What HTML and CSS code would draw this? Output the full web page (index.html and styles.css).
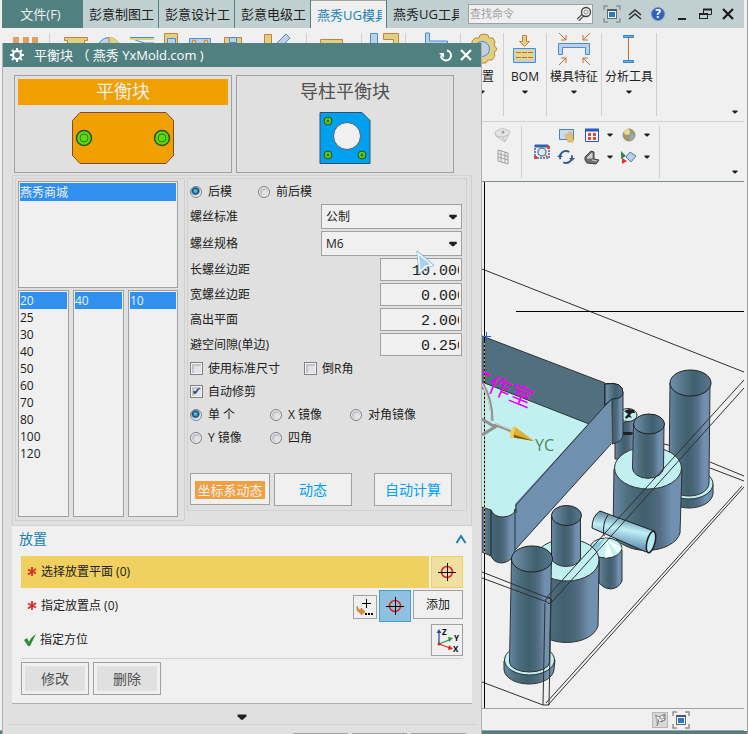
FILE: index.html
```html
<!DOCTYPE html>
<html lang="zh-CN">
<head>
<meta charset="utf-8">
<title>平衡块</title>
<link rel="stylesheet" href="styles.css">
</head>
<body>
<svg class="defs" width="0" height="0" aria-hidden="true">
  <defs>
    <symbol id="caret" viewBox="0 0 8 8"><path d="M1.500 2.500h5v1l-2 2h-1l-2-2z" fill="#202020"/></symbol>
    <symbol id="target" viewBox="0 0 20 20"><circle cx="10" cy="10" r="5.500" fill="none" stroke="#e02020" stroke-width="1.500"/><path d="M10.500 1v18M1 10.500h18" stroke="#000"/></symbol>
    <symbol id="star" viewBox="0 0 10 10"><path d="M5 0v9M1 2.500l8 4M9 2L1 7.500" stroke="#d83028" stroke-width="1.800"/></symbol>
    <symbol id="screen" viewBox="0 0 18 18"><path d="M1 5V1h4M13 1h4v4M17 13v4h-4M5 17H1v-4" fill="none" stroke="#909090" stroke-width="1.500"/><rect x="4.500" y="4.500" width="9" height="9" fill="#f4f4f4" stroke="#606870"/><path d="M4 5h10" stroke="#505860" stroke-width="2"/><rect x="6" y="7" width="6" height="5" fill="#2878c8"/></symbol>
  </defs>
</svg>
<div class="app">
  <header class="tabs">
    <button class="file">文件(F)</button>
    <button class="tab"><span>彭意制图工</span></button>
    <button class="tab"><span>彭意设计工</span></button>
    <button class="tab"><span>彭意电级工</span></button>
    <button class="tab active"><span>燕秀UG模具</span></button>
    <button class="tab"><span>燕秀UG工具</span></button>
    <label class="search">
      <input type="text" placeholder="查找命令" aria-label="查找命令">
      <svg width="16" height="16" viewBox="0 0 16 16"><path d="M2 14l5-5" stroke="#404040" stroke-width="3.500"/><path d="M2 14l5-5" stroke="#e8e8e8" stroke-width="1.300"/><circle cx="10" cy="6" r="4.500" fill="#f0f0f0" stroke="#404040" stroke-width="1.300"/><circle cx="10" cy="6" r="2" fill="none" stroke="#909090"/></svg>
    </label>
    <div class="winbtns">
      <button aria-label="全屏"><svg width="18" height="18"><use href="#screen"/></svg></button>
      <button aria-label="收起"><svg width="18" height="18" viewBox="0 0 18 18"><path d="M3 10l6-5 6 5M3 14l6-5 6 5" fill="none" stroke="#303030" stroke-width="1.500"/></svg></button>
      <button aria-label="帮助"><svg width="18" height="18" viewBox="0 0 18 18"><circle cx="9" cy="9" r="6.500" fill="#3060b8" stroke="#7090c8"/><text x="9" y="13" text-anchor="middle" class="help">?</text></svg></button>
      <button aria-label="最小化"><svg width="18" height="18" viewBox="0 0 18 18"><path d="M5 14h8" stroke="#202020" stroke-width="2"/></svg></button>
      <button aria-label="还原"><svg width="18" height="18" viewBox="0 0 18 18"><path d="M7.500 8V4.500h8v5h-4" fill="none" stroke="#202020"/><path d="M7 4.500h9" stroke="#202020" stroke-width="2"/><rect x="3.500" y="8.500" width="8" height="5" fill="none" stroke="#202020"/><path d="M3 9h9" stroke="#202020" stroke-width="2"/></svg></button>
      <button aria-label="关闭"><svg width="18" height="18" viewBox="0 0 18 18"><path d="M4 4l10 10M14 4L4 14" stroke="#181818" stroke-width="2.200"/></svg></button>
    </div>
  </header>

  <div class="ribbon">
    <div class="group g1"><svg width="28" height="34" viewBox="14 32 28 34"><path d="M15 37h6v8h-6zM25 37h6v8h-6zM34 37h6v8h-6z" fill="#e0a060"/></svg></div>
    <div class="group g2"><svg width="236" height="34" viewBox="58 32 236 34">
      <g fill="#e0d080" stroke="#c88040"><path d="M62.500 37.500h23v3h-3v8h-17v-8h-3z"/><path d="M162.500 33.500h13v14h-13z"/><path d="M222.500 37.500h17v10h-17zM262.500 34.500h7v14h-7z"/></g>
      <g fill="#c0d0e0" stroke="#4090e0"><circle cx="107" cy="49" r="11.500"/><path d="M165.500 38.500h8v8h-8zM187.500 38.500h21v10h-21zM227.500 37.500h7v5h-7zM275 43l9-9 4 4-9 9z"/></g>
      <path d="M107 37v11h11A11 11 0 0 0 107 37z" fill="#e0d080"/><path d="M107 37v11" stroke="#c88040"/>
      <path d="M128 37.500h24M128 38l14 5h10" fill="none" stroke="#4090e0"/><path d="M128 39h24" stroke="#e0d080" stroke-width="2"/><circle cx="192" cy="42" r="2" fill="#e0d080" stroke="#c88040"/><circle cx="204" cy="42" r="2" fill="#e0d080" stroke="#c88040"/>
    </svg></div>
    <div class="group g3"><svg width="30" height="34" viewBox="318 32 30 34"><path d="M319.500 39.500h22v10h-22z" fill="#e0d080" stroke="#c88040"/></svg></div>
    <div class="group g4"><svg width="34" height="34" viewBox="367 32 34 34"><path d="M370.500 33.500h7v14h-7z" fill="#c0d0e0" stroke="#4090e0"/><path d="M383.500 33.500h15v14h-5v-8h-10z" fill="#e0d080" stroke="#c88040"/></svg></div>
    <div class="group g3"><svg width="34" height="34" viewBox="417 32 34 34"><path d="M426.500 33v14h22v-6h-18v-8z" fill="#c0d0e0" stroke="#4090e0"/></svg></div>
    <button class="group g5"><svg width="34" height="34" viewBox="0 0 34 34"><path d="M15 3l4-1 4 1 1 3 4 0 2 4-1 3 3 4-3 4 1 3-3 4-4 0-2 3h-6l-2-3-5 0-2-4 1-4-3-3 3-4 0-4 3-3 4 0z" fill="#e0d080" stroke="#c88040"/><circle cx="17" cy="17" r="7.500" fill="#c0d0e0" stroke="#4090e0"/></svg><span>配置</span><svg class="caret"><use href="#caret"/></svg></button>
    <button class="group g5"><svg width="34" height="34" viewBox="0 0 34 34"><path d="M14.500 3.500h4v6h3l-5 5-5-5h3z" fill="#e0d080" stroke="#c88040"/><path d="M5.500 16.500h22v14h-22z" fill="#c0d0e0" stroke="#4090e0"/><path d="M7 18h19v10H7z" fill="#e0d890"/><path d="M8 20.500h17M8 25.500h17" stroke="#c07030" stroke-dasharray="5 1"/></svg><span>BOM</span><svg class="caret"><use href="#caret"/></svg></button>
    <button class="group g3"><svg width="34" height="34" viewBox="0 0 34 34"><path d="M1.500 11.500h31v11h-4v-7h-23v7h-4z" fill="#c0d0e0" stroke="#4090e0"/><path d="M2 1l7 7M9 3v5H4M33 1l-7 7M26 3v5h5M2 33l7-7M4 26h5v5M33 33l-7-7M31 26h-5v5" fill="none" stroke="#c07030"/></svg><span>模具特征</span><svg class="caret"><use href="#caret"/></svg></button>
    <button class="group g3"><svg width="34" height="34" viewBox="0 0 34 34"><path d="M16.500 6v22" stroke="#c07030"/><path d="M11.500 3.500h10v2h-10zM11.500 28.500h10v2h-10z" fill="#80b0e0" stroke="#3080c8"/></svg><span>分析工具</span><svg class="caret"><use href="#caret"/></svg></button>
    <svg class="caret overflow"><use href="#caret"/></svg>
  </div>

  <div class="toolbar">
    <div class="tools first">
      <svg width="18" height="18" viewBox="0 0 18 18"><path d="M1 6l7-4 8 3-2 5-3 6-9-6z" fill="#e4e4e4" stroke="#c0c0c0"/><path d="M2 10l7 1 2 5M9 11l5-2" fill="none" stroke="#c0c0c0"/><circle cx="9" cy="6" r="1.500" fill="#a0a0a0"/></svg>
      <svg width="18" height="18" viewBox="0 0 18 18"><path d="M4 2l10 3v11L4 13zM7 3v11M11 4v11M4 5.500l10 3M4 9l10 3" fill="#f0f0f0" stroke="#a0a0a0"/></svg>
    </div>
    <div class="tools main">
      <svg class="tall" width="18" height="18" viewBox="0 0 18 18"><rect x="2" y="3" width="14" height="12" fill="none" stroke="#3060b8" stroke-width="1.500" stroke-dasharray="2 1"/><path d="M2 3h13" stroke="#3060b8" stroke-width="3"/><circle cx="9" cy="9" r="4" fill="#e0e8f0" stroke="#708090" stroke-width="1.500"/><path d="M12 12l4 3" stroke="#b09070" stroke-width="2"/><path d="M1 13h3v3H1zM14 3h3v3h-3z" fill="#e04030"/></svg>
      <svg width="18" height="18" viewBox="0 0 18 18"><path d="M2.500 3.500h14v10h-14z" fill="#c8dcec" stroke="#5080b0"/><path d="M8 9l2-1 2 1V6h2l2 4v6h-5z" fill="#e8c070" stroke="#c09850" stroke-width=".5"/></svg>
      <svg width="18" height="18" viewBox="0 0 18 18"><path d="M2.500 3.500h13v12h-13z" fill="#f4f4ff" stroke="#2858c0"/><path d="M2 4h14" stroke="#2858c0" stroke-width="3"/><path d="M5 7h3v3H5zM10 7h3v3h-3zM5 11h3v3H5zM10 11h3v3h-3z" fill="#e04830"/></svg>
      <svg class="caret"><use href="#caret"/></svg>
      <svg width="18" height="18" viewBox="0 0 18 18"><circle cx="9" cy="9" r="6" fill="#a09868" stroke="#909090"/><circle cx="7" cy="6" r="3" fill="#e8d890"/><path d="M9 9l5-2v5l-4 3z" fill="#90a8b8"/></svg>
      <svg class="caret"><use href="#caret"/></svg>
      <svg width="18" height="18" viewBox="0 0 18 18"><circle cx="9" cy="9" r="6" fill="none" stroke="#385890" stroke-width="1.800" stroke-dasharray="15 4" stroke-dashoffset="3"/><path d="M0 9l3-3 3 3zM12 10l3 3 3-3z" fill="#385890"/></svg>
      <svg width="18" height="18" viewBox="0 0 18 18"><path d="M2 9l6-6 3 1v7l5 1-3 4-9-1-2-3z" fill="#707070" stroke="#404040"/><path d="M4 10l5-5v5zM9 12l5 1" fill="#d0d0d0" stroke="#d0d0d0"/></svg>
      <svg class="caret"><use href="#caret"/></svg>
      <svg width="18" height="18" viewBox="0 0 18 18"><path d="M1 3l5 5-5 3z" fill="#308850"/><path d="M2 10l5 3-5 3z" fill="#e03028"/><path d="M6 9l4-5 6 4-5 6z" fill="#b8d0e8" stroke="#5078a8"/></svg>
      <svg class="caret"><use href="#caret"/></svg>
    </div>
    <svg class="caret overflow"><use href="#caret"/></svg>
  </div>

  <main class="viewport">
    <svg viewBox="482 182 262 526" preserveAspectRatio="xMinYMin slice" role="img" aria-label="三维模型">
      <defs>
        <linearGradient id="cyl"><stop offset="0" stop-color="#6888a8"/><stop offset=".2" stop-color="#507080"/><stop offset=".45" stop-color="#406070"/><stop offset=".6" stop-color="#486878"/><stop offset=".7" stop-color="#587088"/><stop offset=".85" stop-color="#7090b0"/><stop offset="1" stop-color="#7090b0"/></linearGradient>
        <linearGradient id="bore"><stop offset="0" stop-color="#7090b0"/><stop offset=".4" stop-color="#507080"/><stop offset=".6" stop-color="#406070"/><stop offset="1" stop-color="#587890"/></linearGradient>
        <linearGradient id="pin" x1=".3" y1="0" x2="0" y2="1"><stop offset="0" stop-color="#507890"/><stop offset=".35" stop-color="#c0f0f8"/><stop offset=".7" stop-color="#6898b8"/><stop offset="1" stop-color="#406078"/></linearGradient>
      </defs>
      <g class="wire"><path d="M482 269L744 372M664 444l8 2M710 462l34 14M710 468l34 13"/></g>
      <g class="solid">
        <path class="body" d="M665 484v9a24 15 0 0 0 48 0v-9z"/><ellipse class="cap" cx="689" cy="484" rx="24" ry="15"/>
        <path class="body" d="M670 383l-1 100a20 13 0 0 0 40 0l1-100z"/><ellipse class="hole" cx="690.500" cy="383" rx="20.500" ry="13"/>
        <path class="body" d="M615 425v34h21v-40z"/><ellipse class="cap" cx="628" cy="415" rx="9" ry="6.500"/>
        <path d="M624 411l5-2 5 1 1 3-3 0-2 2 2 3-3-1-3 2-1-2 3-3zM622 432l9 0 3 1-3 2-8 0z" fill="#202020"/>
        <path class="body" d="M614 469l-1 64a34 21 0 0 0 67 0l2-64z"/><ellipse class="cap" cx="648" cy="468" rx="33.500" ry="21"/>
        <path class="body" d="M633.500 424l-1 44a15 10 0 0 0 31 0l.500-44z"/><ellipse class="hole" cx="649" cy="424" rx="15.500" ry="10"/>

        <path fill="#c0f0f0" d="M482 382L589 424 516 505l-1 9-8 4-13-2-5-8-7-2z"/>
        <path fill="#507080" d="M482 336L605 383l7 0v16l-23 25L482 382z"/>
        <path class="edge" d="M482 336L605 383M605 384v22M482 382L589 424"/>
        <path fill="#7090b0" d="M612 399l-24 25-73 80v46L611 444z"/>
        <path class="edge" d="M611 444L515 550M611 399l-95 106v8"/>
        <path class="body" d="M605 384q18-3 18 9v41q0 8-11 10v-46l-7 7z"/>
        <path class="hole" d="M605 384q18-3 18 9-1 6-11 6l-7 6z"/>
        <path class="body" d="M482 507l9 3q3 7 12 7 12-1 12-8v44q-4 9-13 10-8 0-11-7l-9-4z"/>
        <path class="ink" d="M491 510v46"/>

        <path class="body" d="M599 550v33q5 6 12 6 8-1 11-8v-31z"/>
        <ellipse class="cap" cx="606" cy="548" rx="16" ry="10"/><path d="M606 538l-13 7 5 9zM606 538l-1 20 8-2zM606 538l11 15 5-5z" fill="#f4ffff"/><path d="M606 538l-13 7-2 5 6 1z" fill="#88c8e0"/>
        <path d="M600 511l54 20q2 14-8 21l-54-24q0-12 8-17z" fill="url(#pin)" stroke="#202020"/>
        <path class="ink" d="M608 515q-6 8-4 21"/><ellipse cx="651" cy="542" rx="4" ry="11" transform="rotate(14 651 542)" fill="#b8e8f0" stroke="#202020" stroke-width="1.500"/>

        <path class="body" d="M535 560v66a32 20 0 0 0 63 0l1-66z"/><ellipse class="cap" cx="567" cy="560" rx="32" ry="21"/>
        <path class="body" d="M551.500 515v44a15 10 0 0 0 29 0v-44z"/><ellipse class="hole" cx="566.500" cy="515.500" rx="15" ry="10"/>
        <path class="body" d="M504 661l0 8a25 15 0 0 0 50 0l1-9z"/><ellipse class="cap" cx="529.500" cy="660" rx="25" ry="15"/>
        <path class="body" d="M511.500 559l-2 103a20 10 0 0 0 40 0l2-103z"/><ellipse class="hole" cx="532" cy="559" rx="20.500" ry="13"/>
      </g>
      <g class="wire">
        <path d="M744 380L547 597M744 388L551 603M744 487L548 705M742 486L546 703M482 572l69 27M482 578l65 24M482 682l61 23M545 603l-2 102h6M551 600l-2 105M545 600l4-3 3 3-3 4z"/>
      </g>
      <path d="M484.500 182v526M516 311.500h228" stroke="#000"/>
      <path d="M484.500 343v212" stroke="#e0a050" stroke-dasharray="2 2"/>
      <path d="M482 336.500h9M486.500 332v9" stroke="#3060d0"/>
      <text class="stamp" transform="translate(465 382) rotate(22)">工作室</text>
      <path d="M482 383q10 16 10 38M482 419l13 8-13 8M494 424l20 8" fill="none" stroke="#909090" stroke-width="3"/><path d="M482 384q9 16 9 37M494 423l20 8" fill="none" stroke="#e0e0e0"/>
      <path d="M514 426l-4 11 24 4z" fill="#e0b030"/><path d="M510 437l24 4-22-7z" fill="#806020"/><path d="M514 426q-5 5-4 11l4 1q-1-7 2-11z" fill="#f0d060"/>
      <text class="axis" x="535" y="451">YC</text>
    </svg>
  </main>

  <footer class="status">
    <svg width="18" height="18" viewBox="0 0 18 18"><rect x="1.500" y="1.500" width="15" height="15" fill="#d8d8d8" stroke="#b8b8b8"/><path d="M4 4l4 2 6-3v6l-4 2-2-2-2 6" fill="#b0b0b0" stroke="#808080"/><path d="M6 6h2v2H6zM10 5h2v2h-2zM8 8h2v2H8zM11 8h2v1h-2z" fill="#f0f0f0"/></svg>
    <svg width="18" height="18"><use href="#screen"/></svg>
  </footer>

  <section class="dialog" role="dialog" aria-label="平衡块">
    <div class="titlebar">
      <svg width="16" height="16" viewBox="0 0 16 16"><circle cx="8" cy="8" r="4" fill="none" stroke="#fff" stroke-width="2.200"/><path d="M8 1v2.500M8 12.500V15M1 8h2.500M12.500 8H15M3 3l2 2M11 11l2 2M13 3l-2 2M5 11l-2 2" stroke="#fff" stroke-width="2"/></svg>
      <h1>平衡块 （ 燕秀 YxMold.com )</h1>
      <button aria-label="重置"><svg width="16" height="16" viewBox="0 0 16 16"><path d="M9 3.500a5 5 0 1 1-6 5" fill="none" stroke="#fff" stroke-width="2"/><path d="M1 6h5v5z" fill="#fff"/></svg></button>
      <button aria-label="关闭"><svg width="16" height="16" viewBox="0 0 16 16"><path d="M3 3l10 10M13 3L3 13" stroke="#fff" stroke-width="2.200"/></svg></button>
    </div>

    <div class="cards">
      <button class="card chosen"><span>平衡块</span>
        <svg width="104" height="54" viewBox="0 0 104 54"><path d="M9 1.500h86l7.500 8v35l-7.500 8H9l-7.500-8v-35z" fill="#f0a000" stroke="#804830"/><g fill="#60d810" stroke="#285018" stroke-width="1.500"><circle cx="13" cy="27" r="7.500"/><circle cx="91" cy="27" r="7.500"/></g><g fill="none" stroke="#308018"><circle cx="13" cy="27" r="4"/><circle cx="91" cy="27" r="4"/></g></svg>
      </button>
      <button class="card"><span>导柱平衡块</span>
        <svg width="54" height="54" viewBox="0 0 54 54"><path d="M2 1.500h42l8 8v43H2z" fill="#00a0f0" stroke="#305070"/><circle cx="29" cy="25" r="13.500" fill="#f0f0f0" stroke="#506070"/><g fill="#60c820" stroke="#285018"><circle cx="10" cy="10" r="4"/><circle cx="10" cy="44" r="4"/><circle cx="44" cy="44" r="4"/></g><g fill="#308018"><circle cx="10" cy="10" r="1.500"/><circle cx="10" cy="44" r="1.500"/><circle cx="44" cy="44" r="1.500"/></g></svg>
      </button>
    </div>

    <div class="panel">
      <div class="box lists">
        <select size="5" class="shop" aria-label="商城"><option selected>燕秀商城</option></select>
        <div class="cols">
          <select size="12" aria-label="长"><option selected>20</option><option>25</option><option>30</option><option>40</option><option>50</option><option>60</option><option>70</option><option>80</option><option>100</option><option>120</option></select>
          <select size="12" aria-label="宽"><option selected>40</option></select>
          <select size="12" aria-label="高"><option selected>10</option></select>
        </div>
      </div>
      <form class="box params">
        <div class="opts side"><label><input type="radio" name="side" checked>后模</label><label><input type="radio" name="side">前后模</label></div>
        <div class="field"><label for="std">螺丝标准</label><div class="drop"><select id="std"><option>公制</option></select><svg class="caret big"><use href="#caret"/></svg></div></div>
        <div class="field"><label for="spec">螺丝规格</label><div class="drop"><select id="spec"><option>M6</option></select><svg class="caret big"><use href="#caret"/></svg></div></div>
        <div class="field"><label for="len">长螺丝边距</label><input id="len" class="num" type="text" value="10.000"></div>
        <div class="field"><label for="wid">宽螺丝边距</label><input id="wid" class="num" type="text" value=" 0.000"></div>
        <div class="field"><label for="hgt">高出平面</label><input id="hgt" class="num" type="text" value=" 2.000"></div>
        <div class="field"><label for="gap">避空间隙(单边)</label><input id="gap" class="num" type="text" value=" 0.250"></div>
        <div class="opts checks"><label><input type="checkbox">使用标准尺寸</label><label><input type="checkbox">倒R角</label></div>
        <div class="opts checks"><label><input type="checkbox" checked>自动修剪</label></div>
        <div class="opts mirror"><label><input type="radio" name="m" checked>单 个</label><label><input type="radio" name="m">X 镜像</label><label><input type="radio" name="m">对角镜像</label><label><input type="radio" name="m">Y 镜像</label><label><input type="radio" name="m">四角</label></div>
        <div class="actions"><button type="button" class="hot"><span>坐标系动态</span></button><button type="button"><span>动态</span></button><button type="button" class="auto"><span>自动计算</span></button></div>
      </form>
    </div>

    <div class="place">
      <h2><span>放置</span><svg width="12" height="12" viewBox="0 0 12 12"><path d="M1.500 10L6 3l4.500 7" fill="none" stroke="#2080b0" stroke-width="2"/></svg></h2>
      <div class="row"><p class="sel"><svg width="10" height="10"><use href="#star"/></svg>选择放置平面 (0)</p><button class="sq gold" aria-label="选择平面"><svg width="20" height="20"><use href="#target"/></svg></button></div>
      <div class="row"><p><svg width="10" height="10"><use href="#star"/></svg>指定放置点 (0)</p>
        <button class="sq small" aria-label="点对话框"><svg width="20" height="20" viewBox="0 0 20 20"><path d="M11.500 2v9M7 6.500h9" stroke="#000"/><path d="M2 9q0 4 4 4v-2l4 4-4 3v-2q-5-1-4-7z" fill="#e09020" stroke="#a06010" stroke-width=".5"/><path d="M10 16h2v2h-2zM13 16h2v2h-2zM16 16h2v2h-2z"/></svg></button>
        <button class="sq blue" aria-label="指定点"><svg width="20" height="20"><use href="#target"/></svg></button>
        <button class="add">添加</button></div>
      <div class="row"><p><svg class="tick" width="14" height="14" viewBox="0 0 14 14"><path d="M1 7l3-2 2 4q2-5 7-8-3 6-6 12H5z" fill="#289030"/></svg>指定方位</p>
        <button class="sq" aria-label="坐标系"><svg width="28" height="28" viewBox="0 0 28 28"><path d="M6 18V5" stroke="#2850b0" stroke-width="1.300"/><path d="M3.500 7L6 3l2.500 4z" fill="#2850b0"/><path d="M6 18l10-4" stroke="#309040" stroke-width="1.300"/><path d="M15 11l5 1-4 4z" fill="#309040"/><path d="M6 18l11 4" stroke="#d03020" stroke-width="1.300"/><path d="M16 19l4 4-5 1z" fill="#d03020"/><circle cx="6" cy="18" r="1.500" fill="#e02010"/><text x="9" y="9">Z</text><text x="21" y="15">Y</text><text x="20" y="26">X</text></svg></button></div>
      <div class="edit"><button disabled><span>修改</span></button><button disabled><span>删除</span></button></div>
    </div>

    <svg class="caret more"><use href="#caret"/></svg>
    <div class="bottom"><button aria-label="确定"></button><button aria-label="应用"></button><button aria-label="取消"></button></div>
    <svg class="cursor" width="20" height="24" viewBox="0 0 20 24"><path d="M4 2l14 12-6 1-6 6z" fill="#a8d0f0" stroke="#4898d0" stroke-width="2.500"/><path d="M4 2l14 12-6 1-6 6z" fill="#a8d0f0" stroke="#fff" stroke-width="1.500"/></svg>
  </section>
</div>
</body>
</html>
```
FILE: styles.css
```css
* { box-sizing: border-box; }
body {
  margin: 0;
  font: 12px/16px "Open Sans", "Noto Sans CJK SC", sans-serif;
  color: #202020;
  background: #f0f0f0;
}
button, input, select { font: inherit; color: inherit; margin: 0; border-radius: 0; }
button { padding: 0; border: 0; background: none; }
svg { display: block; flex: none; }
.defs { position: absolute; }
h1, h2, p { margin: 0; font-weight: 400; }
.caret { width: 8px; height: 8px; }
.caret.big { width: 12px; height: 12px; }

.app {
  position: relative;
  display: flex;
  flex-direction: column;
  height: 100vh;
  overflow: hidden;
  padding-right: 3px;
  border-right: 1px solid #a0a0a0;
}
.app::after { content: ""; height: 3px; margin-right: -3px; background: #508080; }

/* tab strip */
.tabs { display: flex; height: 28px; margin-left: 2px; background: #c0d0d0; font-size: 13px; }
.file { width: 81px; padding-right: 4px; background: #508080; color: #f0f0f0; }
.tab { width: 76px; padding: 0 4px 0 6px; border-right: 1px solid #508080; overflow: hidden; }
.tab span { display: block; overflow: hidden; white-space: nowrap; text-align: left; }
.tab.active { background: #f0f0f0; color: #2080b0; border-top: 1px solid #a0a0a0; }
.tab:nth-of-type(6) { border: 0; }
.search { display: flex; align-items: center; width: 125px; height: 20px; margin: 4px 0 0 5px; border: 1px solid #a0a0a0; background: #f0f0f0; }
.search input { flex: 1; min-width: 0; padding: 0 1px; border: 0; background: none; font-size: 11px; }
.search input::placeholder { color: #a0a0a0; }
.winbtns { display: flex; flex: 1; justify-content: space-between; align-items: center; padding: 0 7px 0 10px; }
.help { font-size: 12px; font-weight: 700; fill: #fff; }

/* ribbon */
.ribbon { display: flex; height: 94px; margin-left: 2px; padding: 5px 0; border-bottom: 1px solid #d0d0d0; }
.group { display: flex; flex-direction: column; align-items: center; flex: none; border-right: 1px solid #d0d0d0; }
.group span { margin: 3px 0 3px; white-space: nowrap; }
.group > svg:first-child { margin-top: -1px; }
button.group { justify-content: flex-start; }
.g1 { width: 48px; }
.g2 { width: 257px; }
.g3 { width: 55px; }
.g4 { width: 44px; }
.g5 { width: 43px; }
.overflow { align-self: flex-end; margin: 0 5px 0 auto; }

/* view toolbar */
.toolbar { display: flex; height: 60px; margin-left: 482px; padding: 4px 0 3px; border-bottom: 1px solid #809088; }
.tools { display: grid; align-items: center; align-content: start; border-right: 1px solid #d0d0d0; }
.first { grid-template-rows: 18px 26px; width: 40px; padding-left: 12px; }
.main { grid-template: 18px 26px / 24px 26px 23px 14px 23px 8px; width: 138px; padding-left: 11px; }
.tall { grid-row: span 2; margin-top: 8px; }
.toolbar .overflow { margin-bottom: 2px; }

/* model view */
.viewport { flex: 1; min-height: 0; margin-left: 482px; border-bottom: 1px solid #a0a0a0; }
.viewport > svg { width: 100%; height: 100%; }
.wire path, .edge { fill: none; stroke: #303030; }
.body { fill: url(#cyl); stroke: #303030; }
.cap { fill: #c0f0f0; stroke: #303030; }
.hole { fill: url(#bore); stroke: #202020; }
.ink { fill: none; stroke: #202020; }
.stamp { font-size: 23px; fill: #f000f0; }
.axis { font-size: 16px; fill: #508858; }
.status { display: flex; align-items: center; justify-content: flex-end; gap: 3px; height: 22px; padding-right: 54px; border-bottom: 1px solid #a0a0a0; }

/* dialog */
.dialog {
  position: absolute;
  top: 43px;
  bottom: 0;
  left: 2px;
  width: 480px;
  overflow: hidden;
  border: solid #b0b0b0;
  border-width: 0 1px;
  background: #e0e0e0;
}
.titlebar { display: flex; align-items: center; gap: 4px; height: 24px; margin: 0 -1px; padding: 0 8px 0 7px; background: #508080; color: #fff; }
.titlebar h1 { flex: 1; padding-left: 5px; font-size: 13px; white-space: pre; }

.cards { display: grid; grid-template-columns: 218px 218px; gap: 4px; margin: 8px 0 2px 11px; }
.card { display: flex; flex-direction: column; align-items: center; height: 98px; padding: 3px; gap: 6px; border: 1px solid #a0a0a0; color: #505050; font-size: 18px; line-height: 26px; }
.card span { align-self: stretch; height: 26px; line-height: 24px; }
.chosen span { background: #f0a000; color: #f0f0f0; }

.panel { display: flex; align-items: flex-start; gap: 2px; margin: 0 9px; padding: 2px 4px 4px 2px; border: 1px solid #d0d0d0; }
.box { border: 1px solid #d0d0d0; }
.lists { display: grid; gap: 2px; width: 170px; padding: 2px 6px 3px 2px; }
.lists select { display: block; width: 100%; padding: 1px; border: 1px solid #a0a0a0; background: #f0f0f0; outline: 0; overflow: hidden; scrollbar-width: none; }
.shop { height: 107px; }
.cols { display: grid; grid-template-columns: 51px 51px 50px; gap: 4px; }
.cols select { height: 227px; }
.lists option { min-height: 17px; padding: 0; line-height: 17px; color: #202020; }
.lists option:checked { background: #3090f0 linear-gradient(#3090f0, #3090f0); color: #f0f0f0; -webkit-text-fill-color: #f0f0f0; }

.params { flex: 1; padding: 2px 4px 4px 2px; }
.opts label { display: flex; align-items: center; height: 23px; gap: 5px; white-space: nowrap; }
.side { display: grid; grid-template-columns: 68px 1fr; margin-bottom: 2px; }
.side label { height: 21px; }
.checks { display: grid; grid-template-columns: 114px 1fr; }
.mirror { display: grid; grid-template-columns: 80px 80px 1fr; }
.field { display: flex; align-items: center; justify-content: space-between; margin-bottom: 2px; }
.field + .checks { margin-top: -1px; }
.drop { position: relative; width: 141px; }
.drop select { display: block; appearance: none; width: 100%; height: 25px; padding: 0 4px; border: 1px solid #a0a0a0; background: #f0f0f0; }
.drop .caret { position: absolute; right: 3px; top: 7px; }
.num { width: 82px; height: 23px; padding: 3px 2px 0 31px; border: 1px solid #a0a0a0; background: #f0f0f0; font: 15px/18px "Liberation Mono", monospace; }
.opts input { appearance: none; flex: none; width: 13px; height: 13px; border: 1px solid #808080; background: #e0e4e8; box-shadow: inset 0 0 0 1px #f4f4f4, inset 1px 1px 0 2px #c0c4c8; }
.opts [type="radio"] { width: 12px; height: 12px; border-radius: 50%; margin-right: 1px; }
.opts [type="radio"]:checked { background: radial-gradient(circle at 45% 40%, #50c0e8 0 1px, #104878 3px, #f0f0f0 5px); box-shadow: none; }
.opts [type="checkbox"]:checked::before { content: "✔"; display: block; color: #304890; font: 11px/11px "DejaVu Sans", sans-serif; text-align: center; }

.actions { display: flex; margin-top: 24px; }
.actions button, .edit button { height: 33px; padding: 3px; border: 1px solid #a0a0a0; background: #f0f0f0; font-size: 14px; }
.actions span, .edit span { display: flex; align-items: center; justify-content: center; height: 25px; }
.actions button { width: 78px; color: #00a0f0; }
.actions .hot { width: 80px; height: 32px; margin-right: 4px; padding: 4px; font-size: 13px; }
.hot span { height: 18px; background: #f0a040; color: #f0f0f0; }
.actions .hot span { height: 18px; margin-top: 2px; }
.actions .auto { margin-left: 22px; }

/* placement group */
.place { margin: 0 9px; padding-bottom: 8px; border-bottom: 1px solid #b0b0b0; background: #f0f0f0; }
.place h2 { display: flex; align-items: center; justify-content: space-between; height: 26px; margin-bottom: 4px; padding: 0 5px 0 7px; color: #2080b0; font-size: 14px; }
.row { display: flex; height: 32px; gap: 2px; margin: 0 9px 2px; }
.row p { display: flex; flex: 1; align-items: center; gap: 4px; padding-left: 6px; }
.row .tick { width: 14px; margin: 0 -1px 0 -4px; }
.sel { background: #f0d060; }
.sq { display: grid; place-items: center; width: 32px; height: 32px; border: 1px solid #a0a0a0; }
.small { width: 24px; height: 24px; margin: 5px 0 0; }
.gold { border-color: #f0d060; background: #f0e0a0; }
.blue { border-color: #40a0d0; background: #90c0e0; }
.add { width: 50px; height: 29px; border: 1px solid #a0a0a0; }
.sq text { font-size: 8px; font-weight: 700; }
.edit { display: flex; gap: 4px; margin: 0 9px; padding-top: 3px; border-top: 1px solid #d0d0d0; }
.edit button { width: 68px; color: #505050; }
.edit span { background: #e0e0e0; }

.more { width: 14px; height: 14px; margin: 6px auto 0; }
.bottom { display: flex; justify-content: flex-end; gap: 4px; margin: 0 5px; padding: 8px 10px 0; border-top: 1px solid #d0d0d0; }
.bottom button { width: 55px; height: 26px; border: 1px solid #a0a0a0; background: #f0f0f0; }
.cursor { position: absolute; left: 411px; top: 208px; }
```
